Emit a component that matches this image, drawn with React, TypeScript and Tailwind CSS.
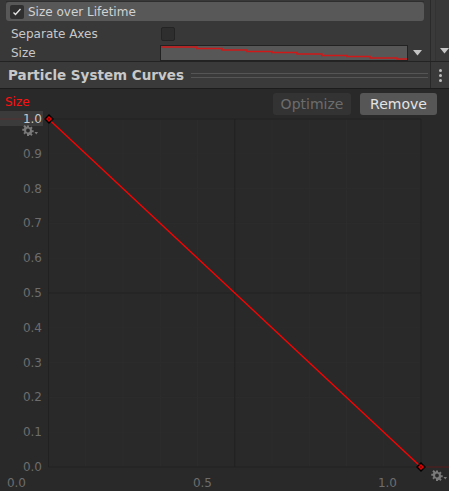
import React from "react";

const font = { fontFamily: '"DejaVu Sans", Verdana, sans-serif' };

// plot mapping
const X0 = 48.5;
const X1 = 421;
const Y1 = 119; // value 1.0
const Y0 = 467; // value 0.0
const px = (t: number) => X0 + (X1 - X0) * t;
const py = (v: number) => Y0 - (Y0 - Y1) * v;

function Gear({ className }: { className?: string }) {
  return (
    <svg width="16" height="11" viewBox="0 0 16 11" className={className}>
      <g fill="#7a7a7a">
        <path d="M5 0.5h2v1.6l1.2.5 1.1-1.1 1.4 1.4-1.1 1.1.5 1.2h1.6v2h-1.6l-.5 1.2 1.1 1.1-1.4 1.4-1.1-1.1-1.2.5v1.6H5V8.8l-1.2-.5-1.1 1.1-1.4-1.4 1.1-1.1-.5-1.2H.3v-2h1.6l.5-1.2-1.1-1.1 1.4-1.4 1.1 1.1L5 2.1z M6 3.6a1.9 1.9 0 1 0 0 3.8 1.9 1.9 0 1 0 0-3.8z" fillRule="evenodd" />
        <path d="M12.5 7h3.5l-1.75 2.5z" />
      </g>
    </svg>
  );
}

function Diamond({ x, y }: { x: number; y: number }) {
  return (
    <g>
      <polygon points={`${x},${y - 4} ${x + 4},${y} ${x},${y + 4} ${x - 4},${y}`} fill="#e00000" stroke="#000" strokeWidth="1.4" />
      <rect x={x - 0.8} y={y - 0.8} width="1.6" height="1.6" fill="#700" />
    </g>
  );
}

function CurveArea() {
  const ticks = Array.from({ length: 11 }, (_, i) => i / 10);
  return (
    <div className="relative flex-1 bg-[#292929] border-t border-[#1c1c1c]">
      <svg width="449" height="402" viewBox="0 89 449 402" className="absolute inset-0" style={font}>
        {/* minor grid */}
        {ticks.map((t) => (
          <g key={t}>
            <line x1={px(t)} y1={Y1} x2={px(t)} y2={Y0} stroke="#2c2c2c" strokeWidth="1" />
            <line x1={X0} y1={py(t)} x2={X1} y2={py(t)} stroke="#2c2c2c" strokeWidth="1" />
          </g>
        ))}
        {/* major grid */}
        {[0, 0.5, 1].map((t) => (
          <g key={"m" + t}>
            <line x1={px(t)} y1={Y1} x2={px(t)} y2={Y0} stroke="#212121" strokeWidth="1" />
            <line x1={X0} y1={py(t)} x2={X1} y2={py(t)} stroke="#212121" strokeWidth="1" />
          </g>
        ))}
        {/* wrap lines */}
        <line x1="0" y1={Y1} x2={X0} y2={Y1} stroke="#5a1c1c" strokeWidth="1" />
        <line x1={X1} y1={Y0} x2="449" y2={Y0} stroke="#5a1c1c" strokeWidth="1" />

        {/* left labels */}
        <rect x="0" y="111" width="43" height="15" fill="#3b3b3b" />
        <line x1="0" y1={Y1} x2={X0} y2={Y1} stroke="#6a2a2a" strokeWidth="1" opacity="0.6" />
        {ticks.map((v) => (
          <text
            key={"l" + v}
            x="42"
            y={py(v)}
            textAnchor="end"
            dominantBaseline="central"
            fontSize="12"
            fill={v === 1 ? "#c8c8c8" : "#6d6d6d"}
          >
            {v.toFixed(1)}
          </text>
        ))}
        {/* bottom labels */}
        {[
          ["0.0", 26],
          ["0.5", 212],
          ["1.0", 397],
        ].map(([t, x]) => (
          <text key={t as string} x={x as number} y="483" textAnchor="end" dominantBaseline="central" fontSize="12" fill="#6d6d6d">
            {t}
          </text>
        ))}

        {/* curve */}
        <line x1={px(0)} y1={Y1} x2={X1} y2={Y0} stroke="#ff0000" strokeWidth="1.3" />
        <Diamond x={49} y={Y1} />
        <Diamond x={X1} y={Y0} />
      </svg>

      <Gear className="absolute left-[22px] top-[36px]" />
      <Gear className="absolute left-[431px] top-[381px]" />

      <div className="absolute inset-x-0 top-0 flex items-start pl-[5px] pr-[12px] pt-[4px]" style={font}>
        <span className="mt-[2px] text-[12px] leading-[14px] text-[#ff1010]">Size</span>
        <div className="ml-auto flex gap-[9px]">
          <div className="flex h-[22px] w-[78px] items-center justify-center rounded-[3px] bg-[#333333] text-[14px] text-[#6c6c6c]">
            Optimize
          </div>
          <div className="flex h-[22px] w-[77px] items-center justify-center rounded-[3px] bg-[#565656] text-[14px] text-[#e4e4e4]">
            Remove
          </div>
        </div>
      </div>
    </div>
  );
}

function Triangle({ className }: { className?: string }) {
  return (
    <svg width="9" height="6" viewBox="0 0 9 6" className={className}>
      <path d="M0 0h9L4.5 5.5z" fill="#c4c4c4" />
    </svg>
  );
}

export default function App() {
  return (
    <div className="flex h-[491px] w-[449px] flex-col overflow-hidden bg-[#383838] text-[12px] text-[#d2d2d2]" style={font}>
      {/* module section */}
      <div className="flex h-[62px] border-b border-[#232323]">
        <div className="flex w-[430px] flex-col">
          <div className="mx-[6px] h-[2px] border-b border-[#2e2e2e]" />
          <div className="mx-[6px] flex h-[19px] items-center rounded-[3px] bg-[#585858] pl-[4px]">
            <div className="flex h-[14px] w-[14px] items-center justify-center rounded-[2px] bg-[#303030]">
              <svg width="10" height="10" viewBox="0 0 10 10">
                <path d="M1.5 5.5l2 2 5-5.5" fill="none" stroke="#e6e6e6" strokeWidth="1.3" />
              </svg>
            </div>
            <span className="ml-[4px] leading-[14px]">Size over Lifetime</span>
          </div>
          <div className="mt-[6px] flex h-[14px] items-center pl-[11px]">
            <span className="w-[150px] leading-[14px] text-[#c8c8c8]">Separate Axes</span>
            <div className="h-[14px] w-[14px] rounded-[2px] border border-[#242424] bg-[#2e2e2e]" />
          </div>
          <div className="mt-[4px] flex h-[16px] items-center pl-[11px]">
            <span className="w-[149px] leading-[14px] text-[#c8c8c8]">Size</span>
            <div className="h-[16px] w-[248px] border border-[#222222] bg-[#575757]">
              <svg width="246" height="14" viewBox="161 46 246 14" className="block">
                <polyline
                  points="161,47 197,47 197,48.5 222,48.5 222,50 247,50 247,51.5 272,51.5 272,52.5 297,52.5 297,54 322,54 322,55.5 347,55.5 347,56.5 370,56.5 370,58 397,58 397,59 407,59"
                  fill="none"
                  stroke="#d01818"
                  strokeWidth="1.5"
                />
              </svg>
            </div>
            <Triangle className="ml-[5px]" />
          </div>
        </div>
        <div className="flex flex-1 border-l border-[#2a2a2a]">
          <div className="w-[5px] border-r border-[#333333] bg-[#3a3a3a]" />
          <div className="flex flex-1 items-start pt-[48px] pl-[4px]">
            <Triangle />
          </div>
        </div>
      </div>

      {/* curves header */}
      <div className="flex h-[26px] items-center bg-[#3a3a3a]">
        <div className="flex w-[430px] items-center pl-[8px] pr-[2px]">
          <span className="text-[13.5px] font-bold leading-[16px] text-[#c8c8c8]">Particle System Curves</span>
          <div className="ml-[7px] h-[5px] flex-1 border-y border-[#555555]" />
        </div>
        <div className="flex h-full flex-1 items-center justify-center border-l border-[#282828]">
          <div className="flex flex-col gap-[2px]">
            <div className="h-[3px] w-[3px] rounded-full bg-[#bcbcbc]" />
            <div className="h-[3px] w-[3px] rounded-full bg-[#bcbcbc]" />
            <div className="h-[3px] w-[3px] rounded-full bg-[#bcbcbc]" />
          </div>
        </div>
      </div>

      <CurveArea />
    </div>
  );
}
